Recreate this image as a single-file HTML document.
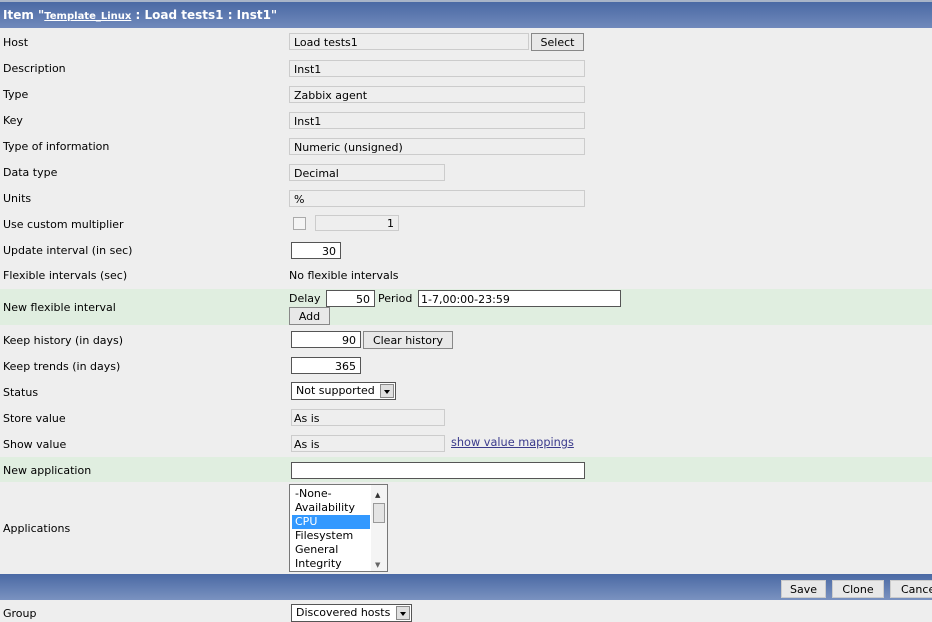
<!DOCTYPE html>
<html><head><style>
body{margin:0;width:932px;height:621px;overflow:hidden;background:#eeeeee;font-family:"DejaVu Sans",Verdana,sans-serif;font-size:11px;color:#000;position:relative}
div,span{position:absolute;box-sizing:border-box}
.hd{left:0;top:2px;width:932px;height:26px;background:linear-gradient(#4a69a4,#7089bb);color:#fff;font-weight:bold;font-size:12px;padding:6px 0 0 3px}
.top{left:0;top:0;width:932px;height:2px;background:#a8b4c8}
.l{left:3px}
.ro{background:#eeeeee;border:1px solid #cccccc;height:17px;padding:2px 0 0 4px;line-height:14px}
.in{background:#fff;border:1px solid #555;height:17px;padding:1px 4px 0 4px;line-height:14px;text-align:right}
.btn{background:#e8e8e8;border:1px solid #888;height:18px;line-height:17px;text-align:center}
.gr{left:0;width:932px;background:#e0eee0}
.sel{background:#fff;border:1px solid #555;height:18px;line-height:16px;padding-left:4px}
.arr{right:1px;top:1px;width:14px;height:14px;background:#e0e0e0;border:1px solid #888}
.arr:after{content:"";position:absolute;left:3px;top:5px;border-left:3px solid transparent;border-right:3px solid transparent;border-top:4px solid #000}
.ft{left:0;top:574px;width:932px;height:26px;background:linear-gradient(#4a69a4,#7a92c0)}
</style></head><body>
<div class="top"></div>
<div class="hd">Item "<u style="font-size:10px">Template_Linux</u> : Load tests1 : Inst1"</div>

<div class="gr" style="top:289px;height:36px"></div>
<div class="gr" style="top:457px;height:25px"></div>

<span class="l" style="top:36px">Host</span>
<span class="l" style="top:62px">Description</span>
<span class="l" style="top:88px">Type</span>
<span class="l" style="top:114px">Key</span>
<span class="l" style="top:140px">Type of information</span>
<span class="l" style="top:166px">Data type</span>
<span class="l" style="top:192px">Units</span>
<span class="l" style="top:218px">Use custom multiplier</span>
<span class="l" style="top:244px">Update interval (in sec)</span>
<span class="l" style="top:269px">Flexible intervals (sec)</span>
<span class="l" style="top:301px">New flexible interval</span>
<span class="l" style="top:334px">Keep history (in days)</span>
<span class="l" style="top:360px">Keep trends (in days)</span>
<span class="l" style="top:386px">Status</span>
<span class="l" style="top:412px">Store value</span>
<span class="l" style="top:438px">Show value</span>
<span class="l" style="top:464px">New application</span>
<span class="l" style="top:522px">Applications</span>
<span class="l" style="top:607px">Group</span>

<div class="ro" style="left:289px;top:33px;width:240px">Load tests1</div>
<div class="btn" style="left:531px;top:33px;width:53px">Select</div>
<div class="ro" style="left:289px;top:60px;width:296px">Inst1</div>
<div class="ro" style="left:289px;top:86px;width:296px">Zabbix agent</div>
<div class="ro" style="left:289px;top:112px;width:296px">Inst1</div>
<div class="ro" style="left:289px;top:138px;width:296px">Numeric (unsigned)</div>
<div class="ro" style="left:289px;top:164px;width:156px">Decimal</div>
<div class="ro" style="left:289px;top:190px;width:296px">%</div>
<div style="left:293px;top:217px;width:13px;height:13px;border:1px solid #aaa;background:#f4f4f4"></div>
<div class="ro" style="left:315px;top:215px;width:84px;height:16px;text-align:right;padding-right:4px;padding-top:1px">1</div>
<div class="in" style="left:291px;top:242px;width:50px;padding-top:2px">30</div>
<span style="left:289px;top:269px">No flexible intervals</span>

<span style="left:289px;top:292px">Delay</span>
<div class="in" style="left:326px;top:290px;width:49px;padding-top:2px">50</div>
<span style="left:378px;top:292px">Period</span>
<div class="in" style="left:418px;top:290px;width:203px;text-align:left;padding-left:2px;padding-top:2px">1-7,00:00-23:59</div>
<div class="btn" style="left:289px;top:307px;width:41px">Add</div>

<div class="in" style="left:291px;top:331px;width:70px;padding-top:2px">90</div>
<div class="btn" style="left:363px;top:331px;width:90px">Clear history</div>
<div class="in" style="left:291px;top:357px;width:70px;padding-top:2px">365</div>
<div class="sel" style="left:291px;top:382px;width:105px">Not supported<div class="arr"></div></div>
<div class="ro" style="left:291px;top:409px;width:154px;height:17px;padding-left:2px">As is</div>
<div class="ro" style="left:291px;top:435px;width:154px;height:17px;padding-left:2px">As is</div>
<span style="left:451px;top:436px;color:#3a3a8c;text-decoration:underline;font-size:11.3px">show value mappings</span>
<div class="in" style="left:291px;top:462px;width:294px"></div>

<div style="left:289px;top:484px;width:99px;height:88px;background:#fff;border:1px solid #777;line-height:14px">
<span style="left:5px;top:2px">-None-</span>
<span style="left:5px;top:16px">Availability</span>
<span style="left:2px;top:30px;width:78px;height:14px;background:#3399ff;color:#fff;padding-left:3px">CPU</span>
<span style="left:5px;top:44px">Filesystem</span>
<span style="left:5px;top:58px">General</span>
<span style="left:5px;top:72px">Integrity</span>
<span style="left:81px;top:0;width:16px;height:86px;background:#f4f4f4"></span>
<span style="left:83px;top:18px;width:12px;height:20px;background:#e4e4e4;border:1px solid #999"></span>
<span style="left:85px;top:3px;font-size:7px;color:#333">▲</span>
<span style="left:85px;top:73px;font-size:7px;color:#666">▼</span>
</div>

<div class="ft"></div>
<div class="btn" style="left:781px;top:580px;width:45px;border-color:#ccc">Save</div>
<div class="btn" style="left:832px;top:580px;width:52px;border-color:#ccc">Clone</div>
<div class="btn" style="left:890px;top:580px;width:52px;border-color:#ccc;text-align:left;padding-left:10px">Cancel</div>
<div class="sel" style="left:291px;top:604px;width:121px">Discovered hosts<div class="arr"></div></div>
</body></html>
